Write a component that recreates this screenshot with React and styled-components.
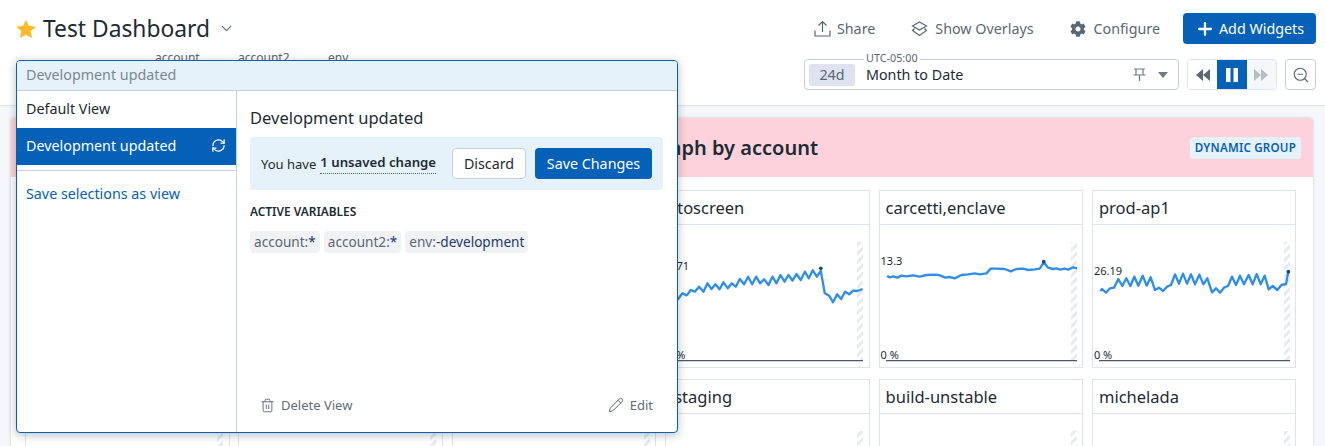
import React from "react";
import styled, { createGlobalStyle } from "styled-components";
import { Trash2, Pencil, RefreshCw, Plus, ZoomOut, ChevronDown } from "lucide-react";
import { FaCog } from "react-icons/fa";

const GlobalStyle = createGlobalStyle`
  html, body {
    margin: 0;
    padding: 0;
    height: 446px;
    overflow: hidden;
    background: #f5f7fa;
    font-family: "Noto Sans", sans-serif;
    color: #1c2b34;
  }
  * { box-sizing: border-box; }
`;

const Page = styled.div`
  position: relative;
  width: 1325px;
  height: 446px;
  overflow: hidden;
`;

const Header = styled.header`
  height: 106px;
  background: white;
  border-bottom: 1px solid #dfe3ef;
  padding: 13px 9px 0 16px;
`;

const TopRow = styled.div`
  display: flex;
  align-items: center;
  justify-content: space-between;
  height: 31px;
`;

const TitleWrap = styled.div`
  display: flex;
  align-items: center;
  gap: 7px;
  & svg.chev { margin-left: 1px; color: #5b6873; }
`;

const Title = styled.h1`
  margin: 0;
  font-size: 22.8px;
  line-height: 31px;
  font-weight: 400;
`;

const Actions = styled.div`
  display: flex;
  align-items: center;
`;

const GhostAction = styled.div`
  display: flex;
  align-items: center;
  gap: ${(p) => p.$iconGap}px;
  font-size: 14.3px;
  color: #5b6873;
  margin-right: ${(p) => p.$gap}px;
`;

const PrimaryButton = styled.button`
  display: flex;
  align-items: center;
  justify-content: center;
  gap: 4px;
  height: 31px;
  width: ${(p) => p.$width}px;
  padding: 0;
  border: none;
  border-radius: 4px;
  background: #0560b8;
  color: white;
  font-family: inherit;
  font-size: 14.3px;
`;

const SecondRow = styled.div`
  display: flex;
  align-items: flex-start;
  justify-content: space-between;
  margin-top: 15px;
`;

const VarLabels = styled.div`
  display: flex;
  margin-top: -9px;
  padding-left: 139px;
  font-size: 12px;
  line-height: 16px;
  color: #5b6873;
`;

const VarLabel = styled.span`
  width: ${(p) => p.$width}px;
`;

const TimeControls = styled.div`
  display: flex;
`;

const TimeBox = styled.div`
  position: relative;
  display: flex;
  align-items: center;
  width: 375px;
  height: 31px;
  border: 1px solid #c7cede;
  border-radius: 4px;
  padding: 0 10px 0 4px;
  font-size: 14.3px;
  margin-right: 8px;
`;

const TimeZone = styled.span`
  position: absolute;
  top: -8px;
  left: 59px;
  padding: 0 2px;
  background: white;
  font-size: 10.8px;
  line-height: 12px;
  color: #5b6873;
`;

const DurationChip = styled.span`
  width: 46px;
  height: 22px;
  line-height: 22px;
  text-align: center;
  border-radius: 3px;
  background: #dfe3ef;
  color: #5b6873;
  margin-right: 11px;
`;

const TimeText = styled.span`
  flex: 1;
`;

const Caret = styled.span`
  width: 0;
  height: 0;
  margin-left: 12px;
  border-left: 5px solid transparent;
  border-right: 5px solid transparent;
  border-top: 6px solid #6e7a85;
`;

const PlayGroup = styled.div`
  display: flex;
  width: 90px;
  height: 31px;
  margin-right: 8px;
  border: 1px solid #dfe3ef;
  border-radius: 4px;
  overflow: hidden;
`;

const PlayButton = styled.div`
  flex: 1;
  display: flex;
  align-items: center;
  justify-content: center;
  background: ${(p) => (p.$active ? "#0560b8" : p.$muted ? "#f5f7fa" : "white")};
  color: ${(p) => (p.$active ? "white" : p.$muted ? "#b4bcc6" : "#5b6873")};
`;

const ZoomButton = styled.div`
  display: flex;
  align-items: center;
  justify-content: center;
  width: 31px;
  height: 31px;
  border: 1px solid #c7cede;
  border-radius: 4px;
  color: #5b6873;
`;

const Board = styled.main`
  padding: 12px 12px 0 11px;
`;

const Group = styled.section`
  background: white;
  border-radius: 3px 3px 0 0;
  box-shadow: 0 0 3px rgba(28, 43, 52, 0.2);
`;

const GroupHead = styled.div`
  display: flex;
  align-items: center;
  justify-content: space-between;
  height: 59px;
  padding: 0 12px 0 636px;
  background: #fed2dc;
  border-radius: 3px 3px 0 0;
`;

const GroupTitle = styled.h2`
  margin: 0;
  font-size: 20px;
  font-weight: 600;
`;

const Badge = styled.span`
  height: 22px;
  line-height: 22px;
  padding: 0 5px;
  border-radius: 4px;
  background: #e6f2f9;
  color: #0560b8;
  font-size: 11.6px;
  font-weight: 600;
  letter-spacing: 0.2px;
`;

const Grid = styled.div`
  display: grid;
  grid-template-columns: repeat(6, 204.5px);
  column-gap: 8.9px;
  row-gap: 11px;
  padding: 13px 0 0 14px;
`;

const Tile = styled.div`
  position: relative;
  height: 178px;
  border: 1px solid #dfe3ef;
  background: white;
`;

const TileTitle = styled.div`
  height: 34px;
  line-height: 33px;
  padding-left: ${(p) => p.$indent || 6}px;
  font-size: 16.5px;
  border-bottom: 1px solid #dfe3ef;
  white-space: nowrap;
  overflow: hidden;
`;

const ChartSvg = styled.svg`
  display: block;
`;

const ChartLabel = styled.span`
  position: absolute;
  left: 1px;
  top: ${(p) => p.$top}px;
  font-size: 11px;
  line-height: 14px;
  color: #1c2b34;
`;

const Popover = styled.div`
  position: absolute;
  left: 16px;
  top: 60px;
  width: 662px;
  height: 373px;
  display: flex;
  flex-direction: column;
  background: white;
  border: 1px solid #0560b8;
  border-radius: 4px;
  box-shadow: 0 2px 10px rgba(28, 43, 52, 0.3);
  overflow: hidden;
`;

const PopoverHead = styled.div`
  height: 30px;
  line-height: 28px;
  padding-left: 9px;
  font-size: 14.3px;
  color: #7b8892;
  background: #e6f2f9;
  border-bottom: 1px solid #c7cede;
`;

const PopoverBody = styled.div`
  flex: 1;
  display: flex;
`;

const Sidebar = styled.div`
  width: 220px;
  border-right: 1px solid #c7cede;
`;

const ViewItem = styled.div`
  display: flex;
  align-items: center;
  justify-content: space-between;
  height: 37px;
  padding: 0 10px 2px 9px;
  font-size: 14.3px;
  background: ${(p) => (p.$active ? "#0560b8" : "white")};
  color: ${(p) => (p.$active ? "white" : "#1c2b34")};
`;

const SideDivider = styled.div`
  height: 1px;
  margin-top: 5px;
  background: #c7cede;
`;

const SaveLink = styled.div`
  padding: 13px 0 0 9px;
  font-size: 14.3px;
  line-height: 20px;
  color: #0560b8;
`;

const Detail = styled.div`
  flex: 1;
  display: flex;
  flex-direction: column;
  padding: 16px 14px 18px 13px;
`;

const DetailTitle = styled.div`
  font-size: 16.5px;
  line-height: 22px;
`;

const UnsavedBar = styled.div`
  display: flex;
  align-items: center;
  height: 53px;
  margin-top: 8px;
  padding: 0 11px;
  border-radius: 4px;
  background: #e6f2f9;
  font-size: 13px;
`;

const UnsavedCount = styled.b`
  margin-left: 4px;
  font-size: 13.2px;
  font-weight: 600;
  padding-bottom: 2px;
  border-bottom: 1px dotted #5b6873;
  margin-right: 16px;
`;

const OutlineButton = styled.button`
  width: 74px;
  height: 31px;
  margin-right: 9px;
  border: 1px solid #c7cede;
  border-radius: 4px;
  background: white;
  color: #1c2b34;
  font-family: inherit;
  font-size: 14.3px;
`;

const SectionLabel = styled.div`
  margin-top: 13px;
  font-size: 11.9px;
  line-height: 16px;
  font-weight: 600;
`;

const Chips = styled.div`
  display: flex;
  gap: 4px;
  margin-top: 12px;
`;

const Chip = styled.span`
  height: 22px;
  line-height: 21px;
  padding: 0 4px;
  border-radius: 4px;
  background: #f1f2f4;
  font-size: 13.6px;
  color: #5b6873;
  & b { font-weight: 400; color: #1b3a6b; }
`;

const DetailFooter = styled.div`
  margin-top: auto;
  display: flex;
  justify-content: space-between;
  padding: 0 10px;
`;

const FooterAction = styled.div`
  display: flex;
  align-items: center;
  gap: 6px;
  font-size: 13px;
  color: #5f6c77;
`;

// points are read from the screenshot in 3x crop coordinates
const tiles = [
  { name: "" }, { name: "" }, { name: "" },
  {
    name: "toscreen",
    indent: 11,
    cropX: 660,
    value: "4.71",
    valueTop: 34,
    dot: [480, 250],
    points: "40,350 52,342 65,325 78,331 90,315 102,320 115,305 128,320 140,295 152,312 164,298 176,313 188,292 201,310 213,295 225,305 237,282 250,298 262,275 274,298 286,275 298,295 310,283 323,300 335,275 347,295 359,270 371,290 383,270 395,287 407,267 420,285 432,260 444,280 456,256 468,275 480,258 492,325 505,332 517,352 529,328 541,342 553,320 565,328 577,317 590,318 605,312",
  },
  {
    name: "carcetti,enclave",
    cropX: 870,
    value: "13.3",
    valueTop: 29,
    dot: [517, 230],
    points: "47,273 55,277 65,274 78,278 90,272 105,274 125,271 145,275 165,270 195,269 205,271 222,278 235,276 250,280 270,270 290,268 310,265 325,268 345,265 358,251 375,251 400,252 418,259 435,252 455,251 470,255 490,253 505,251 517,232 530,248 545,252 555,250 567,254 580,251 590,254 605,247 617,250",
  },
  {
    name: "prod-ap1",
    cropX: 1085,
    value: "26.19",
    valueTop: 39,
    dot: [607, 260],
    points: "43,318 48,312 60,323 72,310 84,308 97,282 109,303 121,280 133,303 145,275 157,302 170,272 182,302 194,277 207,315 219,308 231,318 243,305 255,300 267,268 279,296 291,266 303,296 315,268 327,298 340,269 352,298 364,280 378,322 390,310 402,323 414,308 426,303 438,275 450,300 462,272 474,298 488,270 500,298 512,267 524,298 536,272 548,313 560,303 574,315 586,300 600,297 607,260",
  },
  { name: "" }, { name: "" }, { name: "" },
  { name: "staging", indent: 8 }, { name: "build-unstable" }, { name: "michelada" },
];

function Stripes({ id, x, y, height }) {
  return (
    <>
      <defs>
        <pattern id={id} width="18" height="18" patternUnits="userSpaceOnUse" patternTransform="rotate(-45)">
          <rect width="18" height="9" fill="#e8eaf3" />
        </pattern>
      </defs>
      <rect x={x} y={y} width="18" height={height} fill={`url(#${id})`} />
    </>
  );
}

function TileChart({ tile, index }) {
  const tileLeft = 25 + (index % 6) * 213.4;
  const originX = (tileLeft - (tile.cropX || 0)) * 3;
  return (
    <ChartSvg width="202" height="142" viewBox={`${originX} 120 606 426`}>
      <Stripes id={`stripe-${index}`} x={originX + 573} y={171} height={354} />
      {tile.points && (
        <>
          <line x1={originX + 18} x2={originX + 591} y1="527" y2="527" stroke="#4a5a6a" strokeWidth="4" />
          <polyline points={tile.points} fill="none" stroke="#2f8fe8" strokeWidth="7" strokeLinejoin="round" />
          <circle cx={tile.dot[0]} cy={tile.dot[1]} r="5.5" fill="#0b4a82" />
        </>
      )}
    </ChartSvg>
  );
}

function ShareIcon() {
  return (
    <svg width="17" height="17" viewBox="0 0 17 17" fill="none" stroke="currentColor" strokeWidth="1.2">
      <path d="M1 10.5V16h15v-5.5M8.5 12V1.5M4.5 5.5l4-4 4 4" />
    </svg>
  );
}

function OverlaysIcon() {
  return (
    <svg width="17" height="16" viewBox="0 0 17 16" fill="none" stroke="currentColor" strokeWidth="1.2">
      <path d="M8.5 1L15.5 5l-7 4-7-4zM3.5 7.5L1.5 9.5l7 5 7-5-2-2" />
    </svg>
  );
}

function PinIcon() {
  return (
    <svg width="13" height="13" viewBox="0 0 13 13" fill="none" stroke="#6e7a85" strokeWidth="1.2">
      <path d="M1 1h11M3 1v6h7V1M.5 7h12M6.5 7v6" />
    </svg>
  );
}

export default function App() {
  return (
    <Page>
      <GlobalStyle />
      <Header>
        <TopRow>
          <TitleWrap>
            <svg width="20" height="20" viewBox="0 0 24 24" fill="#fdb92b">
              <path d="M12 .8l3.5 7.4 8.1 1-6 5.6 1.6 8L12 19l-7.2 3.8 1.6-8-6-5.6 8.1-1z" />
            </svg>
            <Title>Test Dashboard</Title>
            <ChevronDown className="chev" size={17} strokeWidth={1.5} />
          </TitleWrap>
          <Actions>
            <GhostAction $gap={36} $iconGap={6}>
              <ShareIcon />
              Share
            </GhostAction>
            <GhostAction $gap={36} $iconGap={7}>
              <OverlaysIcon />
              Show Overlays
            </GhostAction>
            <GhostAction $gap={23} $iconGap={8}>
              <FaCog size={16} />
              Configure
            </GhostAction>
            <PrimaryButton $width={133}>
              <Plus size={20} strokeWidth={2.75} />
              Add Widgets
            </PrimaryButton>
          </Actions>
        </TopRow>
        <SecondRow>
          <VarLabels>
            <VarLabel $width={83}>account</VarLabel>
            <VarLabel $width={90}>account2</VarLabel>
            <VarLabel $width={40}>env</VarLabel>
          </VarLabels>
          <TimeControls>
            <TimeBox>
              <TimeZone>UTC-05:00</TimeZone>
              <DurationChip>24d</DurationChip>
              <TimeText>Month to Date</TimeText>
              <PinIcon />
              <Caret />
            </TimeBox>
            <PlayGroup>
              <PlayButton>
                <svg width="16" height="14" viewBox="0 0 16 14" fill="currentColor"><path d="M8 1v12L1 7zM15 1v12L8 7z" /></svg>
              </PlayButton>
              <PlayButton $active>
                <svg width="12" height="14" viewBox="0 0 12 14" fill="currentColor"><path d="M0 0h4.5v14H0zM7.5 0H12v14H7.5z" /></svg>
              </PlayButton>
              <PlayButton $muted>
                <svg width="16" height="14" viewBox="0 0 16 14" fill="currentColor"><path d="M1 1v12l7-6zM8 1v12l7-6z" /></svg>
              </PlayButton>
            </PlayGroup>
            <ZoomButton>
              <ZoomOut size={18} strokeWidth={1.5} />
            </ZoomButton>
          </TimeControls>
        </SecondRow>
      </Header>
      <Board>
        <Group>
          <GroupHead>
            <GroupTitle>Graph by account</GroupTitle>
            <Badge>DYNAMIC GROUP</Badge>
          </GroupHead>
          <Grid>
            {tiles.map((tile, i) => (
              <Tile key={i}>
                <TileTitle $indent={tile.indent}>{tile.name}</TileTitle>
                <TileChart tile={tile} index={i} />
                {tile.value && <ChartLabel $top={tile.valueTop + 34}>{tile.value}</ChartLabel>}
                {tile.value && <ChartLabel $top={157}>0 %</ChartLabel>}
              </Tile>
            ))}
          </Grid>
        </Group>
      </Board>
      <Popover>
        <PopoverHead>Development updated</PopoverHead>
        <PopoverBody>
          <Sidebar>
            <ViewItem>Default View</ViewItem>
            <ViewItem $active>
              Development updated
              <RefreshCw size={15} strokeWidth={2} />
            </ViewItem>
            <SideDivider />
            <SaveLink>Save selections as view</SaveLink>
          </Sidebar>
          <Detail>
            <DetailTitle>Development updated</DetailTitle>
            <UnsavedBar>
              You have
              <UnsavedCount>1 unsaved change</UnsavedCount>
              <OutlineButton>Discard</OutlineButton>
              <PrimaryButton $width={117}>Save Changes</PrimaryButton>
            </UnsavedBar>
            <SectionLabel>ACTIVE VARIABLES</SectionLabel>
            <Chips>
              <Chip>account:<b>*</b></Chip>
              <Chip>account2:<b>*</b></Chip>
              <Chip>env:<b>-development</b></Chip>
            </Chips>
            <DetailFooter>
              <FooterAction>
                <Trash2 size={15} strokeWidth={1.5} />
                Delete View
              </FooterAction>
              <FooterAction>
                <Pencil size={16} strokeWidth={1.5} />
                Edit
              </FooterAction>
            </DetailFooter>
          </Detail>
        </PopoverBody>
      </Popover>
    </Page>
  );
}
